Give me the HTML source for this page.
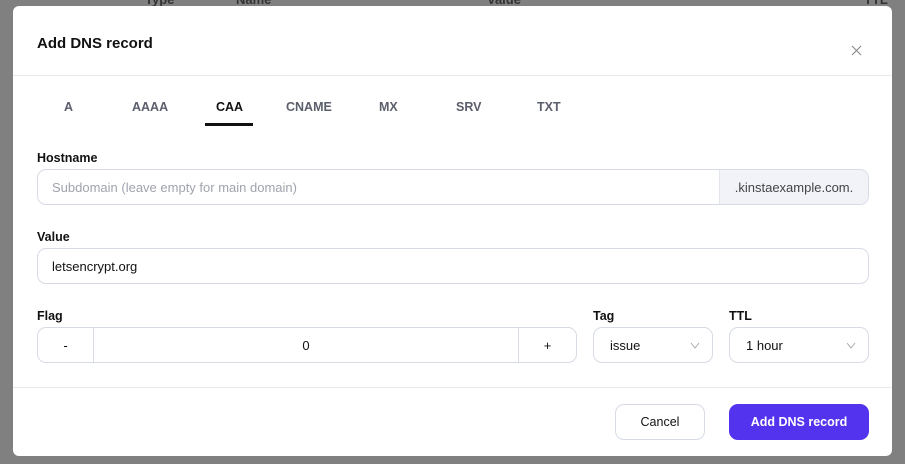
<!DOCTYPE html>
<html><head><meta charset="utf-8"><style>
*{box-sizing:border-box;margin:0;padding:0}
body{width:905px;height:464px;background:#808080;font-family:"Liberation Sans",sans-serif;position:relative;overflow:hidden;color:#111}
.bgt{position:absolute;top:-8px;font-size:13px;font-weight:bold;color:#333}
.modal{position:absolute;left:13px;top:6px;width:879px;height:450px;background:#fff;border-radius:6px}
.abs{position:absolute}
h1{position:absolute;left:24px;top:29px;font-size:15px;font-weight:bold}
.hr{position:absolute;left:0;right:0;height:1px;background:#e8e9ee}
.tab{position:absolute;top:94px;font-size:12.5px;font-weight:bold;color:#5b5e6b}
.lbl{position:absolute;font-size:12.5px;font-weight:bold;color:#111}
.inp{position:absolute;border:1px solid #d7dbe4;border-radius:9px;height:36px;font-size:13px;display:flex;align-items:center;overflow:hidden}
.btn{position:absolute;height:36px;border-radius:9px;font-size:12.5px;display:flex;align-items:center;justify-content:center}
</style></head><body>
<div class="bgt" style="left:145px">Type</div><div class="bgt" style="left:236px">Name</div><div class="bgt" style="left:487px">Value</div><div class="bgt" style="left:864px">TTL</div>
<div class="modal">
<h1>Add DNS record</h1>
<svg class="abs" style="left:838px;top:39px" width="11" height="11" viewBox="0 0 11 11"><path d="M1 1L10 10M10 1L1 10" stroke="#888" stroke-width="1.1"/></svg>
<div class="hr" style="top:69px"></div>
<div class="tab" style="left:51px">A</div>
<div class="tab" style="left:119px">AAAA</div>
<div class="tab" style="left:203px;color:#111">CAA</div>
<div class="abs" style="left:192px;top:117px;width:48px;height:3px;background:#111"></div>
<div class="tab" style="left:273px">CNAME</div>
<div class="tab" style="left:366px">MX</div>
<div class="tab" style="left:443px">SRV</div>
<div class="tab" style="left:524px">TXT</div>
<div class="lbl" style="left:24px;top:145px">Hostname</div>
<div class="inp" style="left:24px;top:163px;width:832px">
 <div style="flex:1;padding-left:14px;color:#a0a3ad">Subdomain (leave empty for main domain)</div>
 <div style="width:149px;height:100%;background:#f2f3f8;border-left:1px solid #e3e5ec;display:flex;align-items:center;justify-content:center;color:#444">.kinstaexample.com.</div>
</div>
<div class="lbl" style="left:24px;top:224px">Value</div>
<div class="inp" style="left:24px;top:242px;width:832px;padding-left:14px">letsencrypt.org</div>
<div class="lbl" style="left:24px;top:303px">Flag</div>
<div class="inp" style="left:24px;top:321px;width:540px">
 <div style="width:56px;height:100%;border-right:1px solid #d7dbe4;display:flex;align-items:center;justify-content:center">-</div>
 <div style="flex:1;text-align:center">0</div>
 <div style="width:58px;height:100%;border-left:1px solid #d7dbe4;display:flex;align-items:center;justify-content:center">+</div>
</div>
<div class="lbl" style="left:580px;top:303px">Tag</div>
<div class="inp" style="left:580px;top:321px;width:120px;padding-left:16px">issue
 <svg class="abs" style="right:12px;top:14px" width="10" height="7" viewBox="0 0 10 7"><path d="M1 1L5 6L9 1" fill="none" stroke="#aaa" stroke-width="1"/></svg></div>
<div class="lbl" style="left:716px;top:303px">TTL</div>
<div class="inp" style="left:716px;top:321px;width:140px;padding-left:16px">1 hour
 <svg class="abs" style="right:12px;top:14px" width="10" height="7" viewBox="0 0 10 7"><path d="M1 1L5 6L9 1" fill="none" stroke="#aaa" stroke-width="1"/></svg></div>
<div class="hr" style="top:381px"></div>
<div class="btn" style="left:602px;top:398px;width:90px;border:1px solid #d7dbe4;color:#111">Cancel</div>
<div class="btn" style="left:716px;top:398px;width:140px;background:#5333ed;color:#fff;font-weight:bold">Add DNS record</div>
</div>
</body></html>
